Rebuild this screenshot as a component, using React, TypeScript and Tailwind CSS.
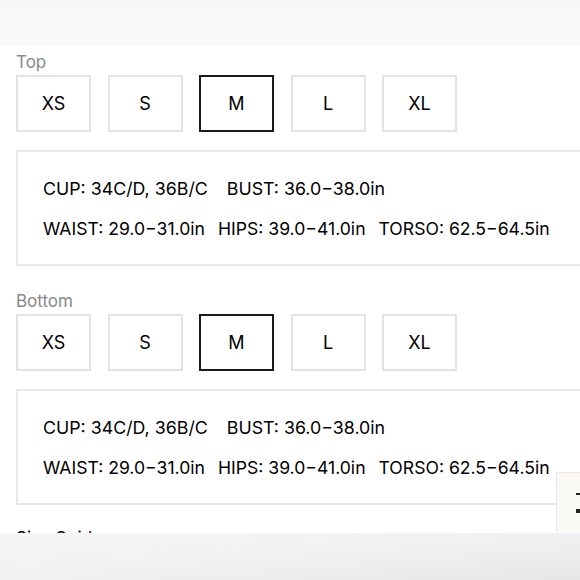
const sizes = ['XS', 'S', 'M', 'L', 'XL'];

type Row = string[];

const rows: Row[] = [
  ['CUP: 34C/D, 36B/C', 'BUST: 36.0−38.0in'],
  ['WAIST: 29.0−31.0in', 'HIPS: 39.0−41.0in', 'TORSO: 62.5−64.5in'],
];

function SizePicker({ label, selected }: { label: string; selected: string }) {
  return (
    <div className="pl-4">
      <p className="text-[17px] leading-[20px] text-[#888]">{label}</p>
      <div className="mt-[3px] flex gap-[16.5px]">
        {sizes.map((s) => (
          <button
            key={s}
            type="button"
            className={
              s === selected
                ? 'flex h-[57px] w-[75px] items-center justify-center border-2 border-[#1a1a1a] text-[18px] text-black'
                : 'flex h-[57px] w-[75px] items-center justify-center border-2 border-[#e3e3e3] text-[18px] text-black'
            }
          >
            {s}
          </button>
        ))}
      </div>
    </div>
  );
}

function Measurements() {
  return (
    <div className="ml-4 mt-[18px] h-[116px] w-[600px] border-2 border-[#e8e8e8] pl-[25px] pt-[25px]">
      {rows.map((row, i) => (
        <div
          key={i}
          className={
            i === 0
              ? 'flex gap-[19px] text-[17.8px] leading-[24px] text-black'
              : 'mt-[16px] flex gap-[13px] text-[17.6px] leading-[24px] text-black'
          }
        >
          {row.map((t) => (
            <span key={t}>{t}</span>
          ))}
        </div>
      ))}
    </div>
  );
}

export default function App() {
  return (
    <div
      className="relative flex h-[580px] w-[580px] flex-col overflow-hidden bg-white"
      style={{ fontFamily: 'Inter, "Liberation Sans", sans-serif' }}
    >
      <div className="h-[46px] bg-gradient-to-b from-[#f7f7f7] to-[#fafafa]" />
      <div className="mt-[6px]">
        <SizePicker label="Top" selected="M" />
        <Measurements />
      </div>
      <div className="mt-[25px]">
        <SizePicker label="Bottom" selected="M" />
        <Measurements />
      </div>
      <p className="ml-4 mt-[23px] text-[17px] leading-[20px] text-black">Size Guide</p>

      {/* grey band at the bottom of the photo */}
      <div className="absolute bottom-0 left-0 h-[47px] w-full bg-gradient-to-br from-[#f6f6f6] via-[#f1f1f1] to-[#e6e6e6]" />

      {/* floating widget on the right edge */}
      <div className="absolute right-0 top-[472px] flex h-[61px] w-[24px] flex-col items-end justify-center gap-[14px] border-l border-t border-[#ebe9e4] bg-[#fbf9f4]">
        <span className="h-[2px] w-[4px] bg-[#222]" />
        <span className="h-[4px] w-[4px] bg-[#222]" />
      </div>
    </div>
  );
}
